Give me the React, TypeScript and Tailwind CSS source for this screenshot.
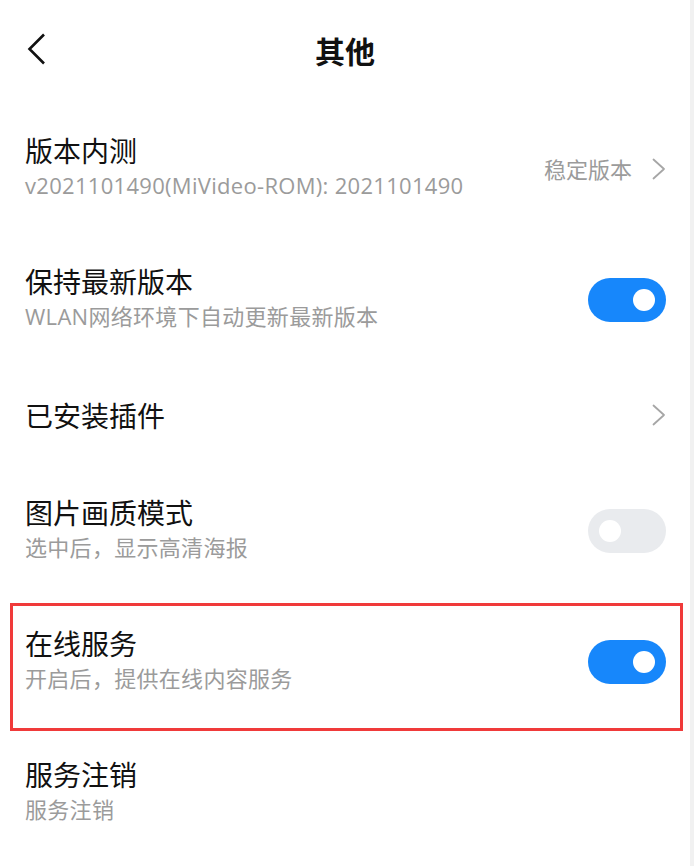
import { useState } from 'react';

interface SettingItem {
  title: string;
  desc?: string;
  value?: string;
  kind: 'link' | 'toggle' | 'none';
  on?: boolean;
  marked?: boolean;
}

const items: SettingItem[] = [
  { title: '版本内测', desc: 'v2021101490(MiVideo-ROM): 2021101490', value: '稳定版本', kind: 'link' },
  { title: '保持最新版本', desc: 'WLAN网络环境下自动更新最新版本', kind: 'toggle', on: true },
  { title: '已安装插件', kind: 'link' },
  { title: '图片画质模式', desc: '选中后，显示高清海报', kind: 'toggle', on: false },
  { title: '在线服务', desc: '开启后，提供在线内容服务', kind: 'toggle', on: true, marked: true },
  { title: '服务注销', desc: '服务注销', kind: 'none' },
];

const Chevron = () => (
  <svg width="14" height="22" viewBox="0 0 14 22" fill="none">
    <path d="M1.5 1.5 L12 11 L1.5 20.5" stroke="#a6a6a6" strokeWidth="1.8" strokeLinecap="round" strokeLinejoin="round" />
  </svg>
);

const Switch = ({ checked, onChange }: { checked: boolean; onChange: () => void }) => (
  <button
    onClick={onChange}
    className={`flex items-center w-[78px] h-[44px] rounded-full px-[11px] ${
      checked ? 'bg-[#1787fb] justify-end' : 'bg-[#e9ebee] justify-start'
    }`}
  >
    <span className="block w-[22px] h-[22px] rounded-full bg-white" />
  </button>
);

const Row = ({ item }: { item: SettingItem }) => {
  const [on, setOn] = useState(!!item.on);

  return (
    <div className={`relative flex items-center pl-[25px] pr-[24px] ${item.desc ? 'h-[131px]' : 'h-[100px]'}`}>
      {item.marked && (
        <div className="absolute left-[10px] right-[7px] top-[7px] bottom-[-4px] border-[3px] border-[#f03a3a] pointer-events-none" />
      )}
      <div className={`flex flex-col flex-1 min-w-0 gap-[4px] ${item.desc ? 'pb-[6px]' : ''}`}>
        <div className="text-[28px] leading-[34px] text-[#111]">{item.title}</div>
        {item.desc && (
          <div
            className="text-[22px] leading-[28px] tracking-[0.3px] text-[#9b9b9b] whitespace-nowrap"
            style={{ fontFamily: '"Open Sans", "Noto Sans CJK SC", sans-serif' }}
          >
            {item.desc}
          </div>
        )}
      </div>
      {item.kind === 'link' && (
        <div className="flex items-center gap-[20px] text-[22px] text-[#9b9b9b]">
          {item.value && <span>{item.value}</span>}
          <Chevron />
        </div>
      )}
      {item.kind === 'toggle' && <Switch checked={on} onChange={() => setOn(!on)} />}
    </div>
  );
};

export default function App() {
  return (
    <div
      className="w-[694px] h-[866px] overflow-hidden bg-white border-r-[4px] border-[#f1f1f1]"
      style={{ fontFamily: '"Noto Sans CJK SC", "Noto Sans", sans-serif' }}
    >
      {/* top bar */}
      <div className="relative flex items-center justify-center h-[103px]">
        <button className="absolute left-[26px] top-[33px]">
          <svg width="22" height="32" viewBox="0 0 22 32" fill="none">
            <path d="M18 1.5 L3.5 16 L18 30.5" stroke="#111" strokeWidth="2.6" strokeLinejoin="miter" />
          </svg>
        </button>
        <h1 className="text-[30px] font-bold text-[#111] -mt-[2px]">其他</h1>
      </div>

      {items.map((item) => (
        <Row key={item.title} item={item} />
      ))}
    </div>
  );
}
